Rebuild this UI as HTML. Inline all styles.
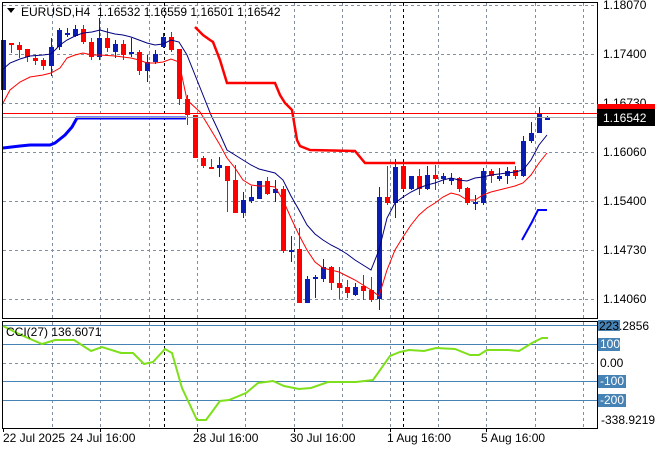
<!DOCTYPE html>
<html><head><meta charset="utf-8"><style>
html,body{margin:0;padding:0;background:#fff;width:660px;height:450px;overflow:hidden}
svg{display:block;font-family:"Liberation Sans",Tahoma,sans-serif;font-size:12px}
</style></head><body>
<svg id="s" width="660" height="450" xmlns="http://www.w3.org/2000/svg">
<rect x="0" y="0" width="660" height="450" fill="#fff"/>
<g id="grid" stroke="#8090a0" stroke-dasharray="3,3" stroke-width="1"></g>
<g id="bars"></g>
<polyline fill="none" stroke="#0000ff" stroke-width="3" points="3,148 20,146 30,145 50,145 55,143 65,135 72,127 77,118 186,118"/>
<polyline fill="none" stroke="#0000ff" stroke-width="2" points="522,240 532,222 538,210 547,210"/>
<polyline fill="none" stroke="#ff0000" stroke-width="2.5" points="195,27 203,35 210,40 213,42 220,60 227,83 275,83 280,95 285,103 292,110 297,140 300,146 310,150 355,151 365,163 515,163"/>
<polyline fill="none" stroke="#000080" stroke-width="1" points="2,70 10,63 20,59 30,56 43,55 51,54 60,45 67,40 75,36 83,33 92,32 100,30 107,32 115,34 123,35 131,37 139,40 147,43 155,45 163,44 171,40 179,42 187,55 195,75 203,95 211,115 219,132 227,150 235,155 243,160 251,165 259,169 267,171 275,173 283,180 291,196 299,210 307,225 315,234 323,240 331,245 339,249 347,254 355,260 363,265 371,270 379,250 387,218 395,203 403,197 411,192 419,188 427,185 435,183 443,180 451,178 459,180 467,181 475,178 483,177 491,175 499,174 507,173 515,172 523,170 531,160 539,145 547,135"/>
<polyline fill="none" stroke="#ff0000" stroke-width="1" points="2,105 10,90 20,82 30,77 43,75 51,73 60,68 67,58 75,55 83,53 92,55 100,55 115,56 123,57 131,58 139,60 147,63 155,63 163,62 171,59 179,62 187,100 200,112 211,130 220,145 227,158 235,168 243,180 251,185 259,186 267,186 275,187 283,200 291,218 299,235 307,250 315,262 323,268 331,270 339,272 347,276 355,280 363,285 371,290 379,296 387,270 395,250 403,237 411,225 419,215 427,208 435,203 443,197 451,193 459,195 467,200 475,200 483,195 491,192 499,190 507,188 515,186 523,183 531,175 539,163 547,153"/>
<line x1="2" y1="113.5" x2="597" y2="113.5" stroke="#ff0000"/>
<line x1="2" y1="117.5" x2="597" y2="117.5" stroke="#a0a8b0"/>
<rect x="2.5" y="2.5" width="595" height="316" fill="none" stroke="#000"/>
<rect x="2.5" y="321.5" width="595" height="107" fill="none" stroke="#000"/>
<g stroke="#4682b4"><line x1="3" y1="325.5" x2="597" y2="325.5"/><line x1="3" y1="344.5" x2="597" y2="344.5"/><line x1="3" y1="381.5" x2="597" y2="381.5"/><line x1="3" y1="400.5" x2="597" y2="400.5"/></g>
<line x1="3" y1="363.5" x2="597" y2="363.5" stroke="#8090a0" stroke-dasharray="3,3"/>
<polyline fill="none" stroke="#7ee01a" stroke-width="2" points="3,326 21,335 42,344 55,340 74,340 91,351 102,347 121,353 133,353 144,364 153,362 165,349 172,353 182,388 197,420 206,420 220,401 229,400 246,393 258,383 273,381 284,386 299,389 311,388 328,382 356,382 373,380 390,356 400,352 409,350 424,351 436,348 455,349 470,355 479,355 487,350 508,350 519,351 532,343 542,338 548,338"/>
<text x="6" y="336" fill="#000">CCI(27) 136.6071</text>
<g fill="#000">
<text x="603" y="9">1.18070</text>
<text x="603" y="58">1.17400</text>
<text x="603" y="107">1.16730</text>
<text x="603" y="156">1.16060</text>
<text x="603" y="205">1.15400</text>
<text x="603" y="254">1.14730</text>
<text x="603" y="303">1.14060</text>
</g>
<rect x="597" y="104" width="58" height="5" fill="#ff0000"/>
<rect x="597" y="109" width="58" height="17" fill="#000"/>
<text x="603" y="122" fill="#fff">1.16542</text>
<rect x="598" y="320" width="22" height="11" fill="#4682b4"/>
<text x="599" y="330" fill="#000">223.2856</text>
<rect x="598" y="338" width="22" height="13" fill="#4682b4"/><text x="600" y="348" fill="#fff">100</text>
<text x="600" y="367" fill="#000">0.00</text>
<rect x="598" y="375" width="28" height="13" fill="#4682b4"/><text x="600" y="385" fill="#fff">-100</text>
<rect x="598" y="394" width="28" height="13" fill="#4682b4"/><text x="600" y="404" fill="#fff">-200</text>
<text x="601" y="424" fill="#000">-338.9219</text>
<path d="M7 8 L15 8 L11 13 Z" fill="#000"/>
<text x="21" y="16" fill="#000" style="white-space:pre">EURUSD,H4  1.16532 1.16559 1.16501 1.16542</text>
<g fill="#000"><text x="3" y="442">22 Jul 2025</text><text x="70" y="442">24 Jul 16:00</text><text x="193" y="442">28 Jul 16:00</text><text x="290" y="442">30 Jul 16:00</text><text x="387" y="442">1 Aug 16:00</text><text x="481" y="442">5 Aug 16:00</text></g>
<g stroke="#000"><line x1="3.5" y1="428" x2="3.5" y2="432"/><line x1="100.5" y1="428" x2="100.5" y2="432"/><line x1="197.5" y1="428" x2="197.5" y2="432"/><line x1="294.5" y1="428" x2="294.5" y2="432"/><line x1="390.5" y1="428" x2="390.5" y2="432"/><line x1="486.5" y1="428" x2="486.5" y2="432"/></g>
</svg>
<script>
var NS="http://www.w3.org/2000/svg";
function el(p,t,a){var e=document.createElementNS(NS,t);for(var k in a)e.setAttribute(k,a[k]);p.appendChild(e);return e;}
var g=document.getElementById("grid");
[52,100,149,197,245,294,342,390,438,486,535,583].forEach(function(x){
 el(g,"line",{x1:x+.5,y1:3,x2:x+.5,y2:318});el(g,"line",{x1:x+.5,y1:322,x2:x+.5,y2:428});});
[5,54,103,152,201,250,299].forEach(function(y){el(g,"line",{x1:3,y1:y+.5,x2:597,y2:y+.5});});
[164,403].forEach(function(x){
 el(g,"line",{x1:x+.5,y1:3,x2:x+.5,y2:318,stroke:"#000"});el(g,"line",{x1:x+.5,y1:322,x2:x+.5,y2:428,stroke:"#000"});});
var B=[
["B",40,90,40,90],["R",43,45,43,53],["R",45,50,42,58],["R",49,57,49,62],["R",58,61,55,65],["R",60,66,58,70],
["B",47,66,38,76],["B",30,47,28,50],["B",33,35,28,37],["B",29,36,25,37],["R",29,42,25,44],["R",42,57,38,60],
["B",38,57,18,60],["R",38,48,28,52],["B",44,52,40,58],["R",44,55,40,60],["B",52,54,38,57],["R",52,71,50,75],
["B",62,71,55,82],["B",54,62,50,64],["B",37,47,33,48],["R",37,50,32,52],["R",49,99,49,105],["R",99,115,95,125],
["R",115,158,115,158],["R",158,166,156,168],["R",167,169,159,169],["B",165,168,157,177],["R",166,181,166,212],
["R",180,213,165,213],["B",200,213,192,218],["B",197,201,186,203],["B",181,199,181,199],["R",181,194,177,195],
["B",189,193,180,202],["R",189,251,186,253],["B",250,251,236,262],["R",249,303,228,303],["B",279,303,276,303],
["B",277,279,275,298],["B",267,279,259,282],["R",267,283,266,290],["R",283,288,267,299],["R",287,293,280,298],
["B",287,295,283,296],["R",286,291,275,300],["R",290,300,277,302],["B",197,299,187,310],["R",197,203,166,205],
["B",167,203,159,218],["R",166,189,162,190],["B",176,189,176,190],["R",176,189,169,195],["B",175,189,166,190],
["R",175,179,165,190],["B",176,179,173,184],["B",178,181,173,185],["R",178,189,177,192],["R",188,203,187,205],
["B",202,203,195,210],["B",171,203,168,205],["R",171,176,169,183],["B",176,179,168,181],["B",171,176,167,184],
["R",170,176,166,179],["B",141,176,136,177],["B",133,141,122,143],["B",113,133,107,133],["B",118,119,116,120]];
var bg=document.getElementById("bars");
B.forEach(function(b,i){var x=3+8*i;var c=b[0]=="B"?"#0a1eb4":"#ff0000";
 el(bg,"rect",{x:x,y:b[3],width:1,height:Math.max(1,b[4]-b[3]),fill:c});
 var h=b[2]-b[1];if(h<2){el(bg,"rect",{x:x-2,y:b[1],width:5,height:2,fill:c});}
 else el(bg,"rect",{x:x-2,y:b[1],width:5,height:h,fill:c});});
</script>
</body></html>
